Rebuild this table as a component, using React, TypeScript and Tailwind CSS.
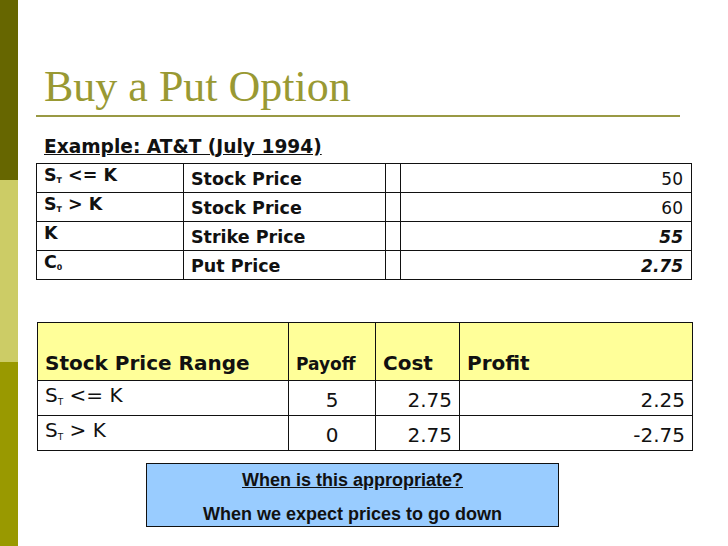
import React from "react";

const dv = { fontFamily: '"DejaVu Sans", Verdana, sans-serif' };

function ST() {
  return (
    <span>
      S<sub className="text-[0.45em] align-baseline relative top-[0.3em]">T</sub>
    </span>
  );
}

export default function App() {
  return (
    <div className="w-[728px] h-[546px] bg-white flex overflow-hidden">
      <div className="w-[18px] h-full flex flex-col shrink-0">
        <div className="h-[180px] bg-[#666600]" />
        <div className="h-[182px] bg-[#cccc66]" />
        <div className="flex-1 bg-[#999900]" />
      </div>
      <div className="flex-1 pl-[18px] flex flex-col">
        <div
          className="pt-[65px] pl-[8px] text-[44px] leading-[44px] text-[#999933]"
          style={{ fontFamily: '"Liberation Serif", "Times New Roman", serif' }}
        >
          Buy a Put Option
        </div>
        <div className="mt-[6px] w-[644px] h-[2px] bg-[#999944]" />
        <div
          className="mt-[19px] pl-[8px] text-[18.6px] leading-[22px] font-bold underline text-[#111]"
          style={dv}
        >
          Example: AT&amp;T (July 1994)
        </div>
        <table
          className="mt-[5px] border-collapse w-[655px] table-fixed text-[#111]"
          style={dv}
        >
          <colgroup>
            <col className="w-[147px]" />
            <col className="w-[202px]" />
            <col className="w-[15px]" />
            <col className="w-[291px]" />
          </colgroup>
          <tbody>
            {[
              { a: <><ST /> &lt;= K</>, b: "Stock Price", v: "50", bi: false },
              { a: <><ST /> &gt; K</>, b: "Stock Price", v: "60", bi: false },
              { a: <>K</>, b: "Strike Price", v: "55", bi: true },
              { a: <>C<sub className="text-[0.45em] align-baseline relative top-[0.3em]">0</sub></>, b: "Put Price", v: "2.75", bi: true },
            ].map((r, i) => (
              <tr key={i} className="h-[29px]">
                <td className="border border-[#111] px-[7px] align-top text-[17.5px] leading-[20px] font-bold pt-[1px]">
                  {r.a}
                </td>
                <td className="border border-[#111] px-[7px] align-bottom text-[17.5px] leading-[20px] font-bold pb-[3px]">
                  {r.b}
                </td>
                <td className="border border-[#111]" />
                <td
                  className={`border border-[#111] px-[8px] text-right align-bottom text-[17px] leading-[20px] pb-[3px] ${
                    r.bi ? "font-bold italic" : ""
                  }`}
                >
                  {r.v}
                </td>
              </tr>
            ))}
          </tbody>
        </table>

        <table
          className="mt-[42px] ml-[1px] border-collapse w-[655px] table-fixed text-[#111]"
          style={dv}
        >
          <colgroup>
            <col className="w-[251px]" />
            <col className="w-[87px]" />
            <col className="w-[84px]" />
            <col className="w-[233px]" />
          </colgroup>
          <thead>
            <tr className="h-[58px] bg-[#ffff99]">
              <th className="border border-[#111] px-[7px] text-left align-bottom text-[20px] leading-[24px] font-bold pb-[5px]">
                Stock Price Range
              </th>
              <th className="border border-[#111] px-[7px] text-left align-bottom text-[17px] leading-[20px] font-bold pb-[6px]">
                Payoff
              </th>
              <th className="border border-[#111] px-[7px] text-left align-bottom text-[20px] leading-[24px] font-bold pb-[5px]">
                Cost
              </th>
              <th className="border border-[#111] px-[7px] text-left align-bottom text-[20px] leading-[24px] font-bold pb-[5px]">
                Profit
              </th>
            </tr>
          </thead>
          <tbody>
            {[
              { a: <><ST /> &lt;= K</>, p: "5", c: "2.75", pr: "2.25" },
              { a: <><ST /> &gt; K</>, p: "0", c: "2.75", pr: "-2.75" },
            ].map((r, i) => (
              <tr key={i} className="h-[35px]">
                <td className="border border-[#111] px-[7px] text-[20px] leading-[24px] align-top pt-[2px]">
                  {r.a}
                </td>
                <td className="border border-[#111] px-[7px] text-[20px] leading-[24px] text-center align-bottom pb-[3px]">
                  {r.p}
                </td>
                <td className="border border-[#111] px-[7px] text-[20px] leading-[24px] text-right align-bottom pb-[3px]">
                  {r.c}
                </td>
                <td className="border border-[#111] px-[7px] text-[20px] leading-[24px] text-right align-bottom pb-[3px]">
                  {r.pr}
                </td>
              </tr>
            ))}
          </tbody>
        </table>

        <div
          className="mt-[12px] ml-[110px] w-[413px] h-[64px] bg-[#99ccff] border border-[#111] flex flex-col items-center font-bold text-[18px] text-[#111]"
          style={{ fontFamily: '"Liberation Sans", Arial, sans-serif' }}
        >
          <div className="mt-[6px] leading-[20px] underline">When is this appropriate?</div>
          <div className="mt-[14px] leading-[20px]">When we expect prices to go down</div>
        </div>
      </div>
    </div>
  );
}
